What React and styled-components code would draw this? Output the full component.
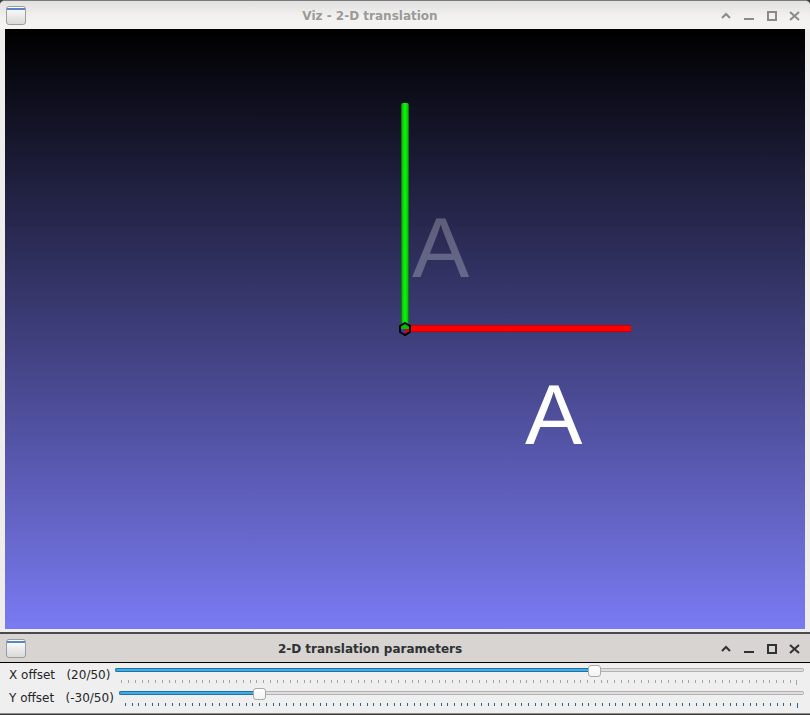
import React from 'react';
import styled, { createGlobalStyle } from 'styled-components';

const Global = createGlobalStyle`
  html, body { margin: 0; padding: 0; background: #3b3b3b; }
  body { font-family: "DejaVu Sans", sans-serif; }
`;

const Screen = styled.div`
  width: 810px;
  height: 715px;
  display: flex;
  flex-direction: column;
  overflow: hidden;
`;

const Window = styled.div`
  display: flex;
  flex-direction: column;
  background: ${p => (p.$active ? '#efefef' : '#eeedeb')};
  border-top: ${p => (p.$active ? '2px solid #4a4a4a' : '1px solid #7b7b7b')};
  border-radius: ${p => (p.$active ? '0' : '5px 5px 0 0')};
  overflow: hidden;
`;

const TitleBar = styled.div`
  height: 28px;
  display: flex;
  align-items: center;
  padding: 0 4px 0 6px;
  background: ${p => (p.$active ? '#d7d4d1' : 'linear-gradient(#e1e1e1, #f3f2f0 60%, #f4f3f1)')};
  color: ${p => (p.$active ? '#2f3133' : '#9a9a9a')};
`;

const WinIcon = styled.div`
  width: 20px;
  height: 19px;
  box-sizing: border-box;
  border: 1px solid #9c9c9c;
  border-radius: 3px;
  background: linear-gradient(#fdfdfd 0, #fdfdfd 1px, #5b86c4 1px, #5b86c4 3px, #f8f8f8 3px, #d9d9d9);
  flex: none;
`;

const Title = styled.div`
  flex: 1;
  text-align: center;
  font: bold 12px "DejaVu Sans", sans-serif;
  padding-top: 2px;
`;

const Buttons = styled.div`
  display: flex;
  padding-top: 2px;
`;

const Btn = styled.div`
  width: 23px;
  height: 16px;
  display: flex;
  align-items: center;
  justify-content: center;
`;

const CanvasFrame = styled.div`
  padding: 0 5px 3px 5px;
`;

const Canvas = styled.svg`
  display: block;
  width: 800px;
  height: 600px;
`;

const Panel = styled.div`
  border-top: 1px solid #000;
  border-bottom: 1px solid #8c8c8c;
  background: #efefef;
  padding: 1px 6px 3px 0;
  display: flex;
  flex-direction: column;
`;

const Row = styled.div`
  display: flex;
  height: 23px;
  align-items: flex-start;
`;

const Label = styled.span`
  white-space: pre;
  font: 12px "DejaVu Sans", sans-serif;
  color: #232627;
  padding-left: 9px;
  margin-right: 5px;
  line-height: 23px;
`;

const Slider = styled.div`
  flex: 1;
  display: flex;
  flex-direction: column;
  padding-top: 1px;
`;

const Track = styled.div`
  position: relative;
  height: 12px;
`;

const Groove = styled.div`
  margin-top: 3px;
  height: 4px;
  display: flex;
`;

const Fill = styled.div`
  box-sizing: border-box;
  height: 100%;
  background: #3daee9;
  border: 1px solid #236f9d;
  border-right: none;
  border-radius: 2px 0 0 2px;
`;

const Rest = styled.div`
  flex: 1;
  box-sizing: border-box;
  height: 100%;
  background: #dedede;
  border: 1px solid #b2b2b2;
  border-left: none;
  border-radius: 0 2px 2px 0;
`;

const Handle = styled.div`
  position: absolute;
  top: 0;
  width: 13px;
  height: 12px;
  box-sizing: border-box;
  background: linear-gradient(#ffffff, #f2f2f2);
  border: 1px solid #a9a9a9;
  border-radius: 3px;
`;

const Ticks = styled.div`
  display: flex;
  justify-content: space-between;
  align-items: flex-start;
  padding: 0 6px;
  margin-top: 3px;
  height: 5px;
`;

const Tick = styled.div`
  width: 1px;
  height: ${p => (p.$long ? 5 : 3)}px;
  background: ${p => (p.$focus ? '#1f6796' : '#a4a4a4')};
`;

const ICON_COLOR = { on: '#2f3133', off: '#8a8a8a' };

function WindowButtons({ active }) {
  const c = active ? ICON_COLOR.on : ICON_COLOR.off;
  return (
    <Buttons>
      <Btn>
        <svg width="10" height="10" viewBox="0 0 10 10">
          <polyline points="1,7 5,3 9,7" fill="none" stroke={c} strokeWidth="2" />
        </svg>
      </Btn>
      <Btn>
        <svg width="10" height="10" viewBox="0 0 10 10">
          <rect x="0" y="7" width="10" height="2" fill={c} />
        </svg>
      </Btn>
      <Btn>
        <svg width="10" height="10" viewBox="0 0 10 10">
          <rect x="1" y="1" width="8" height="8" fill="none" stroke={c} strokeWidth="2" />
        </svg>
      </Btn>
      <Btn>
        <svg width="11" height="10" viewBox="0 0 11 10">
          <path d="M1 1 L10 9 M10 1 L1 9" stroke={c} strokeWidth="2" />
        </svg>
      </Btn>
    </Buttons>
  );
}

function TrackBar({ label, value, min = -50, max = 50, focus }) {
  const t = (value - min) / (max - min);
  const count = max - min + 1;
  return (
    <Row>
      <Label>{label}</Label>
      <Slider>
        <Track>
          <Groove>
            <Fill style={{ width: `calc(${t} * (100% - 13px) + 6px)` }} />
            <Rest />
          </Groove>
          <Handle style={{ left: `calc(${t} * (100% - 13px))` }} />
        </Track>
        <Ticks>
          {Array.from({ length: count }, (_, i) => (
            <Tick key={i} $focus={focus} $long={i === count - 1} />
          ))}
        </Ticks>
      </Slider>
    </Row>
  );
}

function VizScene() {
  return (
    <Canvas viewBox="0 0 800 600">
      <defs>
        <linearGradient id="bg" x1="0" y1="0" x2="0" y2="1">
          <stop offset="0" stopColor="#000000" />
          <stop offset="1" stopColor="#7a7af2" />
        </linearGradient>
        <linearGradient id="gax" x1="0" y1="0" x2="1" y2="0">
          <stop offset="0" stopColor="#0b5e0b" />
          <stop offset="0.2" stopColor="#10c810" />
          <stop offset="0.5" stopColor="#00ff00" />
          <stop offset="0.8" stopColor="#10c810" />
          <stop offset="1" stopColor="#0b5e0b" />
        </linearGradient>
        <linearGradient id="rax" x1="0" y1="0" x2="0" y2="1">
          <stop offset="0" stopColor="#b00000" />
          <stop offset="0.2" stopColor="#ff0000" />
          <stop offset="0.8" stopColor="#ff0000" />
          <stop offset="1" stopColor="#b00000" />
        </linearGradient>
        <clipPath id="hexclip">
          <polygon points="400,294 405,297 405,303 400,306 395,303 395,297" />
        </clipPath>
      </defs>
      <rect x="0" y="0" width="800" height="600" fill="url(#bg)" />
      <text
        x="407"
        y="248"
        fontFamily="'Liberation Sans', Arial, sans-serif"
        fontSize="86"
        fill="#ffffff"
        fillOpacity="0.26"
      >
        A
      </text>
      <rect x="396" y="74" width="8" height="226" rx="2" fill="url(#gax)" />
      <rect x="400" y="296" width="226" height="7" fill="url(#rax)" />
      <g clipPath="url(#hexclip)">
        <rect x="394" y="293" width="12" height="7" fill="#00c000" />
        <rect x="394" y="300" width="6" height="7" fill="#3a3aa0" />
        <rect x="400" y="300" width="6" height="7" fill="#e00000" />
      </g>
      <polygon
        points="400,294 405,297 405,303 400,306 395,303 395,297"
        fill="none"
        stroke="#000"
        strokeWidth="2"
      />
      <text
        x="520"
        y="415"
        fontFamily="'Liberation Sans', Arial, sans-serif"
        fontSize="86"
        fill="#ffffff"
      >
        A
      </text>
    </Canvas>
  );
}

export default function App() {
  return (
    <>
      <Global />
      <Screen>
        <Window>
          <TitleBar>
            <WinIcon />
            <Title>Viz - 2-D translation</Title>
            <WindowButtons />
          </TitleBar>
          <CanvasFrame>
            <VizScene />
          </CanvasFrame>
        </Window>
        <Window $active>
          <TitleBar $active>
            <WinIcon />
            <Title>2-D translation parameters</Title>
            <WindowButtons active />
          </TitleBar>
          <Panel>
            <TrackBar label={'X offset   (20/50)'} value={20} />
            <TrackBar label={'Y offset   (-30/50)'} value={-30} focus />
          </Panel>
        </Window>
      </Screen>
    </>
  );
}
